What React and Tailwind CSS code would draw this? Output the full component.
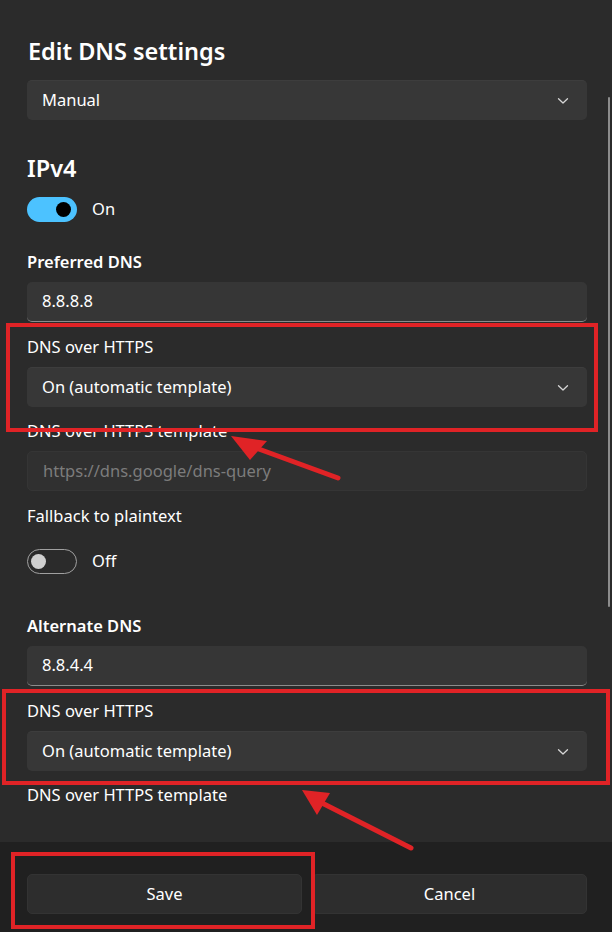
import React from "react"

const FONT = { fontFamily: '"Noto Sans", "Open Sans", sans-serif' }

function Chevron() {
  return (
    <svg width="12" height="8" viewBox="0 0 12 8" className="shrink-0">
      <path d="M1.5 1.8 L6 6 L10.5 1.8" fill="none" stroke="#d6d6d6" strokeWidth="1.3" strokeLinecap="round" strokeLinejoin="round" />
    </svg>
  )
}

function Select({ value, className = "" }) {
  return (
    <div className={`h-[40px] rounded-[5px] bg-[#373737] border-t border-[#3d3d3d] flex items-center justify-between pl-[15px] pr-[18px] ${className}`}>
      <span className="text-[16.5px] text-white">{value}</span>
      <Chevron />
    </div>
  )
}

function Field({ value, placeholder, disabled, className = "" }) {
  return (
    <div
      className={`h-[40px] rounded-[5px] flex items-center pl-[15px] ${
        disabled ? "bg-[#303030] border border-[#353535]" : "bg-[#363636] border-b border-[#8c8c8c]"
      } ${className}`}
    >
      {value ? (
        <span className="text-[16.5px] text-white">{value}</span>
      ) : (
        <span className="text-[16.5px] text-[#7c7c7c]">{placeholder}</span>
      )}
    </div>
  )
}

function Label({ children, bold, className = "" }) {
  return (
    <div className={`h-[24px] leading-[24px] text-[16.5px] text-white ${bold ? "font-semibold" : ""} ${className}`}>
      {children}
    </div>
  )
}

function Toggle({ on, className = "" }) {
  return (
    <div className={`h-[25px] flex items-center gap-[15px] ${className}`}>
      {on ? (
        <div className="w-[50px] h-[25px] rounded-full bg-[#4cc2ff] flex items-center justify-end pr-[6px]">
          <div className="w-[15px] h-[15px] rounded-full bg-black" />
        </div>
      ) : (
        <div className="w-[50px] h-[25px] rounded-full border border-[#a0a0a0] flex items-center pl-[3px]">
          <div className="w-[15px] h-[15px] rounded-full bg-[#d0d0d0]" />
        </div>
      )}
      <span className="text-[16.5px] text-white">{on ? "On" : "Off"}</span>
    </div>
  )
}

export default function App() {
  return (
    <div className="relative w-[612px] h-[932px] overflow-hidden bg-[#2b2b2b]" style={FONT}>
      {/* contenu */}
      <div className="h-[842px] overflow-hidden pl-[27px] pr-[25px] pt-[35px] flex flex-col">
        <div className="h-[32px] leading-[32px] text-[23.5px] font-semibold text-white pl-[1px]">Edit DNS settings</div>
        <Select value="Manual" className="mt-[13px]" />

        <div className="mt-[32px] h-[32px] leading-[32px] text-[23.5px] font-semibold text-white">IPv4</div>
        <Toggle on className="mt-[13px]" />

        <Label bold className="mt-[28px]">Preferred DNS</Label>
        <Field value="8.8.8.8" className="mt-[8px]" />
        <Label className="mt-[13px]">DNS over HTTPS</Label>
        <Select value="On (automatic template)" className="mt-[8px]" />
        <Label className="mt-[12px]">DNS over HTTPS template</Label>
        <Field placeholder="https://dns.google/dns-query" disabled className="mt-[8px]" />
        <Label className="mt-[13px]">Fallback to plaintext</Label>
        <Toggle className="mt-[21px]" />

        <Label bold className="mt-[40px]">Alternate DNS</Label>
        <Field value="8.8.4.4" className="mt-[8px]" />
        <Label className="mt-[13px]">DNS over HTTPS</Label>
        <Select value="On (automatic template)" className="mt-[8px]" />
        <Label className="mt-[12px]">DNS over HTTPS template</Label>
      </div>

      {/* footer */}
      <div className="h-[90px] bg-[#202020] pl-[27px] pr-[25px] pt-[32px] flex gap-[10px]">
        <button className="flex-1 h-[40px] rounded-[5px] bg-[#2d2d2d] border border-[#333333] text-[16.5px] text-white">Save</button>
        <button className="flex-1 h-[40px] rounded-[5px] bg-[#2d2d2d] border border-[#333333] text-[16.5px] text-white">Cancel</button>
      </div>

      {/* scrollbar */}
      <div className="absolute left-[608px] top-[97px] w-[2px] h-[510px] rounded-full bg-[#8d8d8d]" />

      {/* annotations */}
      <svg className="absolute inset-0 pointer-events-none" width="612" height="932" viewBox="0 0 612 932">
        <g fill="none" stroke="#e02326" strokeWidth="4">
          <rect x="8" y="325" width="588" height="105" />
          <rect x="4" y="691" width="604" height="92" />
          <rect x="13" y="854" width="300" height="73" />
        </g>
        <g stroke="#e02326" strokeWidth="5" strokeLinecap="round">
          <line x1="256" y1="448" x2="338" y2="478" />
          <line x1="318" y1="801" x2="411" y2="848" />
        </g>
        <g fill="#e02326">
          <polygon points="231,436 267,441 250,460" />
          <polygon points="302,790 330,793 317,815" />
        </g>
      </svg>
    </div>
  )
}
